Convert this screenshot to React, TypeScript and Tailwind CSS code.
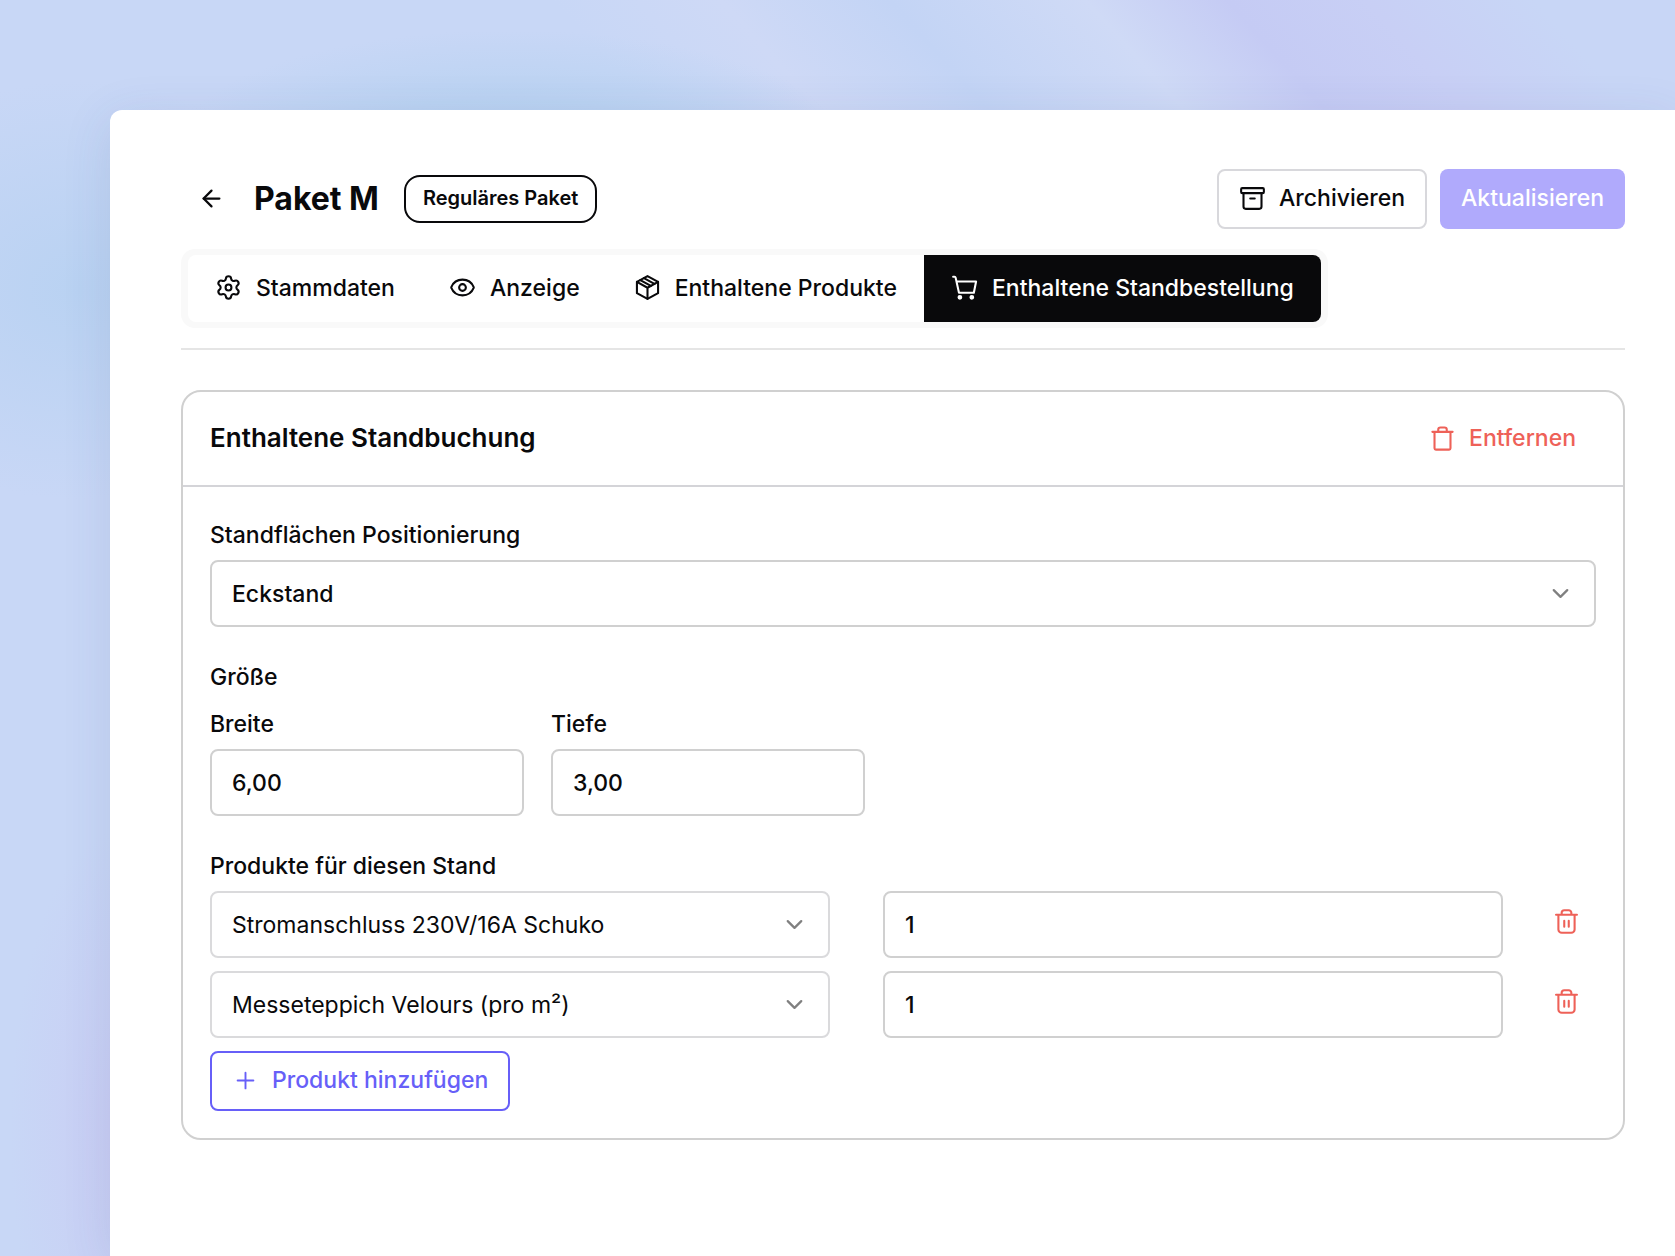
import { useState } from "react";
import type { ReactNode } from "react";
import { ArrowLeft, ChevronDown, Eye, Plus } from "lucide-react";

type IconProps = { className?: string };

function Svg({ className, children }: IconProps & { children: ReactNode }) {
  return (
    <svg
      viewBox="0 0 24 24"
      fill="none"
      stroke="currentColor"
      strokeWidth={1.85}
      strokeLinecap="round"
      strokeLinejoin="round"
      aria-hidden="true"
      className={className}
    >
      {children}
    </svg>
  );
}

function GearIcon({ className }: IconProps) {
  return (
    <Svg className={className}>
      <path d="M9.671 4.136a2.34 2.34 0 0 1 4.659 0 2.34 2.34 0 0 0 3.319 1.915 2.34 2.34 0 0 1 2.33 4.033 2.34 2.34 0 0 0 0 3.831 2.34 2.34 0 0 1-2.33 4.033 2.34 2.34 0 0 0-3.319 1.915 2.34 2.34 0 0 1-4.659 0 2.34 2.34 0 0 0-3.32-1.915 2.34 2.34 0 0 1-2.33-4.033 2.34 2.34 0 0 0 0-3.831A2.34 2.34 0 0 1 6.35 6.051a2.34 2.34 0 0 0 3.319-1.915" />
      <circle cx="12" cy="12" r="2.6" />
    </Svg>
  );
}

function BoxIcon({ className }: IconProps) {
  return (
    <Svg className={className}>
      <path d="M12 1.9 21.4 7v10L12 22.1 2.6 17V7z" />
      <path d="M2.6 7 12 12.2 21.4 7M12 12.2v9.9" />
      <path d="m5.6 5.4 9.4 5.1M8.8 3.7l9.4 5.1" />
    </Svg>
  );
}

function CartIcon({ className }: IconProps) {
  return (
    <Svg className={className}>
      <path d="M1.9 2.4h1.2a1 1 0 0 1 1 .8l3 13.4h13.2l2-10H5" />
      <circle cx="7.9" cy="20.7" r="1.2" fill="currentColor" />
      <circle cx="18.5" cy="20.7" r="1.2" fill="currentColor" />
    </Svg>
  );
}

function ArchiveIcon({ className }: IconProps) {
  return (
    <Svg className={className}>
      <rect x="1.9" y="2.8" width="20.2" height="4.4" rx="1" />
      <path d="M4 7.2v12a2 2 0 0 0 2 2h12a2 2 0 0 0 2-2v-12M10 12h4" />
    </Svg>
  );
}

function BinIcon({ className }: IconProps) {
  return (
    <Svg className={className}>
      <path d="M3 6.1h18M8.2 6.1V4.2a2 2 0 0 1 2-2h3.6a2 2 0 0 1 2 2v1.9M4.9 6.1v14.6a1.2 1.2 0 0 0 1.2 1.2h11.8a1.2 1.2 0 0 0 1.2-1.2V6.1" />
    </Svg>
  );
}

function TrashIcon({ className }: IconProps) {
  return (
    <Svg className={className}>
      <path d="M2.7 6h18.6M7.7 6V4.3a2.3 2.3 0 0 1 2.3-2.3h4a2.3 2.3 0 0 1 2.3 2.3V6M4.8 6v13a3 3 0 0 0 3 3h8.4a3 3 0 0 0 3-3V6M10 11.3v5.4M14 11.3v5.4" />
    </Svg>
  );
}

function EyeIcon({ className }: IconProps) {
  return <Eye className={className} strokeWidth={1.85} />;
}

const tabs = [
  { title: "Stammdaten", icon: GearIcon },
  { title: "Anzeige", icon: EyeIcon },
  { title: "Enthaltene Produkte", icon: BoxIcon },
  { title: "Enthaltene Standbestellung", icon: CartIcon },
];

const positions = ["Eckstand", "Reihenstand", "Kopfstand", "Blockstand"];

const products = ["Stromanschluss 230V/16A Schuko", "Messeteppich Velours (pro m²)"];

const fieldClass =
  "block w-full h-[67px] rounded-lg border-2 bg-white px-5 text-[23px] text-zinc-950";

type SelectProps = {
  id?: string;
  label?: string;
  options: string[];
  initial: string;
  className: string;
};

function Select({ id, label, options, initial, className }: SelectProps) {
  return (
    <div className="relative">
      <select
        id={id}
        aria-label={label}
        defaultValue={initial}
        className={`${fieldClass} appearance-none ${className}`}
      >
        {options.map((option) => (
          <option key={option}>{option}</option>
        ))}
      </select>
      <ChevronDown
        className="pointer-events-none absolute inset-y-0 right-[22px] my-auto size-[27px] text-[#808080]"
        strokeWidth={2}
      />
    </div>
  );
}

export default function App() {
  const [activeTab, setActiveTab] = useState("Enthaltene Standbestellung");

  return (
    <div className="min-h-screen overflow-hidden pt-[110px] pl-[110px] font-[Inter,sans-serif] text-[23px] leading-6 font-medium text-zinc-950 bg-[radial-gradient(340px_120px_at_510px_150px,#b6d0f0_0%,#bbd3f2_45%,transparent_100%),radial-gradient(260px_210px_at_80px_290px,#b9d2f2_0%,transparent_100%),radial-gradient(110px_300px_at_120px_1130px,#c9cdf4_0%,transparent_100%),linear-gradient(48deg,transparent_60%,#ced9f6_66%,#c3d4f5_72%,#cfdaf6_79%,#c5cbf4_84%,#c8cff5_89%,#c8d6f6_95%)] bg-[#c8d7f6]">
      <main className="min-h-[calc(100vh-110px)] rounded-tl-xl bg-white pt-[59px] pr-[50px] pb-16 pl-[71px] shadow-[0_10px_50px_rgba(60,70,130,0.12)]">

        {/* Header */}
        <header className="flex items-center justify-between">
          <div className="flex items-center">
            <button
              type="button"
              aria-label="Zurück"
              className="flex size-[60px] items-center justify-center pb-0.5"
            >
              <ArrowLeft className="size-[27px]" strokeWidth={2} />
            </button>
            <h1 className="ml-[13px] text-[32px] leading-10 font-bold">Paket M</h1>
            <span className="ml-[25px] flex h-12 items-center rounded-2xl border-2 border-zinc-950 px-[17px] pb-0.5 text-[20px] font-semibold">
              Reguläres Paket
            </span>
          </div>

          <div className="flex gap-[13px]">
            <button
              type="button"
              className="flex h-[60px] items-center gap-[13px] rounded-lg border-2 border-[#d8d8dc] px-5 pb-0.5"
            >
              <ArchiveIcon className="size-[27px]" />
              Archivieren
            </button>
            <button
              type="button"
              disabled
              className="h-[60px] rounded-lg bg-[#b0aafc] px-[21px] pb-0.5 text-white"
            >
              Aktualisieren
            </button>
          </div>
        </header>

        {/* Tabs */}
        <nav className="mt-5 w-fit rounded-[14px] bg-[#f9f9f9] px-[7px] py-[6px]">
          <div className="flex overflow-hidden rounded-lg bg-white">
            {tabs.map((tab) => {
              const Icon = tab.icon;

              return (
                <button
                  key={tab.title}
                  type="button"
                  onClick={() => setActiveTab(tab.title)}
                  className={`flex h-[67px] items-center gap-[14px] px-[27px] pb-0.5 ${
                    activeTab === tab.title ? "bg-[#09090b] text-white" : ""
                  }`}
                >
                  <Icon className="size-[27px]" />
                  {tab.title}
                </button>
              );
            })}
          </div>
        </nav>

        <hr className="mt-5 border-t-2 border-[#e5e5e5]" />

        {/* Booth booking */}
        <section className="mt-10 rounded-[20px] border-2 border-[#d0d0d0]">
          <div className="flex items-center justify-between border-b-2 border-[#d4d4d8] px-[27px] pt-4 pb-[17px]">
            <h2 className="text-[26px] leading-8 font-semibold">Enthaltene Standbuchung</h2>
            <button
              type="button"
              className="flex h-[60px] items-center gap-[13px] px-5 text-[#ee6158]"
            >
              <BinIcon className="size-[27px]" />
              Entfernen
            </button>
          </div>

          <form className="px-[27px] pt-9 pb-[27px]">
            <label htmlFor="position" className="mb-[13px] block">
              Standflächen Positionierung
            </label>
            <Select
              id="position"
              options={positions}
              initial="Eckstand"
              className="border-[#d0d0d0] font-medium"
            />

            <fieldset className="mt-[38px]">
              <legend>Größe</legend>
              <div className="mt-[23px] grid max-w-[655px] grid-cols-2 gap-[27px]">
                <div>
                  <label htmlFor="width" className="mb-[13px] block">
                    Breite
                  </label>
                  <input
                    id="width"
                    defaultValue="6,00"
                    className={`${fieldClass} border-[#d0d0d0]`}
                  />
                </div>
                <div>
                  <label htmlFor="depth" className="mb-[13px] block">
                    Tiefe
                  </label>
                  <input
                    id="depth"
                    defaultValue="3,00"
                    className={`${fieldClass} border-[#d0d0d0]`}
                  />
                </div>
              </div>
            </fieldset>

            <fieldset className="mt-[38px]">
              <legend>Produkte für diesen Stand</legend>
              <div className="mt-[13px] flex flex-col items-start gap-[13px]">
                {products.map((product) => (
                  <div key={product} className="flex w-full items-start">
                    <div className="grid flex-1 grid-cols-2 gap-[53px]">
                      <Select
                        label="Produkt"
                        options={products}
                        initial={product}
                        className="border-[#dadadc] font-normal"
                      />
                      <input
                        aria-label="Anzahl"
                        defaultValue="1"
                        className={`${fieldClass} border-[#d0d0d0]`}
                      />
                    </div>
                    <button
                      type="button"
                      aria-label="Produkt entfernen"
                      className="ml-[33px] flex size-[60px] items-center justify-center text-[#ee6158]"
                    >
                      <TrashIcon className="size-[27px]" />
                    </button>
                  </div>
                ))}
                <button
                  type="button"
                  className="flex h-[60px] items-center gap-[13px] rounded-lg border-2 border-[#675ff8] px-5 pb-0.5 text-[#675ff8]"
                >
                  <Plus className="size-[27px]" strokeWidth={1.7} />
                  Produkt hinzufügen
                </button>
              </div>
            </fieldset>
          </form>
        </section>
      </main>
    </div>
  );
}
